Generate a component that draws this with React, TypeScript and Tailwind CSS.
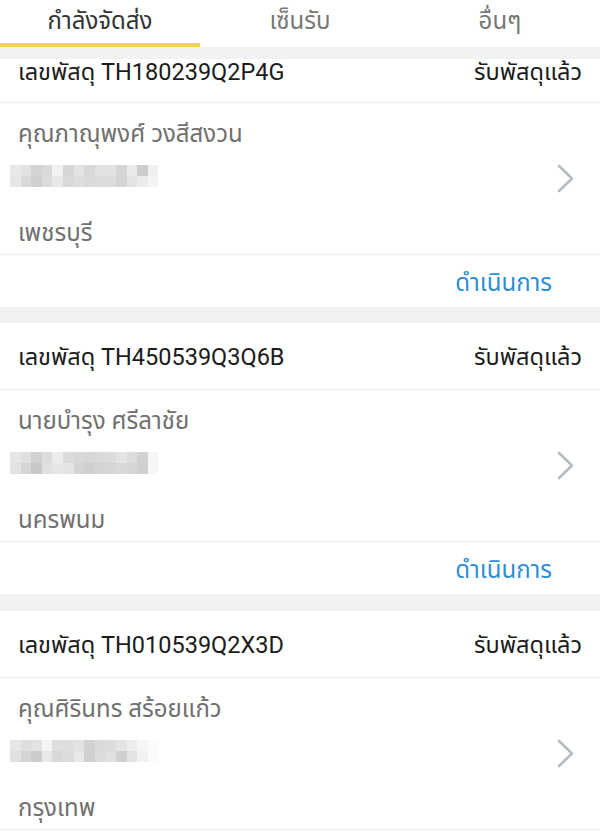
import React from 'react';

type Parcel = {
  id: string;
  name: string;
  province: string;
  blur: number[][];
};

const PARCELS: Parcel[] = [
  {
    id: 'TH180239Q2P4G',
    name: 'คุณภาณุพงศ์ วงสีสงวน',
    province: 'เพชรบุรี',
    blur: [
      [0xe8, 0xe2, 0xd4, 0xda, 0xf2, 0xd6, 0xe3, 0xd8, 0xe1, 0xe2, 0xd5, 0xea, 0xcc, 0xf0],
      [0xe6, 0xd9, 0xcf, 0xdc, 0xe8, 0xd9, 0xde, 0xda, 0xdc, 0xdc, 0xd4, 0xe3, 0xec, 0xf4],
    ],
  },
  {
    id: 'TH450539Q3Q6B',
    name: 'นายบำรุง  ศรีลาชัย',
    province: 'นครพนม',
    blur: [
      [0xe6, 0xe0, 0xd0, 0xdc, 0xec, 0xdb, 0xd8, 0xd6, 0xd9, 0xdc, 0xe4, 0xdc, 0xd2, 0xf6],
      [0xe2, 0xd6, 0xc8, 0xe0, 0xe6, 0xe4, 0xd4, 0xcf, 0xd3, 0xd6, 0xd8, 0xd6, 0xd0, 0xf6],
    ],
  },
  {
    id: 'TH010539Q2X3D',
    name: 'คุณศิรินทร สร้อยแก้ว',
    province: 'กรุงเทพ',
    blur: [
      [0xe6, 0xde, 0xe2, 0xf4, 0xde, 0xde, 0xe2, 0xd2, 0xda, 0xdc, 0xe4, 0xee, 0xf6, 0xfb],
      [0xe0, 0xd4, 0xcc, 0xe8, 0xd8, 0xdc, 0xe8, 0xd0, 0xdc, 0xe0, 0xd0, 0xe4, 0xf2, 0xfb],
    ],
  },
];

const gray = (v: number) => `rgb(${v}, ${v}, ${v})`;

const Chevron = () => (
  <svg width="18" height="29" viewBox="0 0 18 29" fill="none">
    <polyline
      points="2,2 15,14.5 2,27"
      stroke="#b4bbc1"
      strokeWidth="2.6"
      strokeLinecap="round"
      strokeLinejoin="round"
    />
  </svg>
);

const BlurredPhone = ({ rows }: { rows: number[][] }) => (
  <div className="ml-[10px] flex flex-col blur-[0.6px]">
    {rows.map((row, r) => (
      <div key={r} className="flex">
        {row.map((v, c) => (
          <div key={c} className="w-[10.6px] h-[11px]" style={{ backgroundColor: gray(v) }} />
        ))}
      </div>
    ))}
  </div>
);

const ParcelCard = ({ p, first, last }: { p: Parcel; first?: boolean; last?: boolean }) => (
  <div className="bg-white">
    {/* header */}
    <div
      className={`flex justify-between px-[18px] text-[23.5px] text-[#1c1c1c] ${
        first ? 'h-[43px] items-start leading-[26px]' : 'h-[66px] items-center pt-[3px]'
      }`}
    >
      <span>เลขพัสดุ {p.id}</span>
      <span>รับพัสดุแล้ว</span>
    </div>
    <div className="h-px bg-[#ececec]" />

    {/* body */}
    <div className="flex items-center justify-between h-[151px] pr-[25px]">
      <div className="flex flex-col text-[24px] text-[#707070]">
        <div className="pl-[18px] mt-[10px] leading-[28px]">{p.name}</div>
        <div className="mt-[17px]">
          <BlurredPhone rows={p.blur} />
        </div>
        <div className="pl-[18px] mt-[32px] leading-[28px]">{p.province}</div>
      </div>
      <Chevron />
    </div>
    <div className="h-px bg-[#ececec]" />

    {!last && (
      <>
        <div className="flex items-center justify-end h-[52px] pr-[48px] pt-[3px] text-[24px] text-[#2d8fd5]">
          ดำเนินการ
        </div>
        <div className={`${first ? 'h-[16px]' : 'h-[17px]'} bg-[#f2f2f2]`} />
      </>
    )}
  </div>
);

export default function App() {
  return (
    <div
      className="w-[600px] h-[833px] overflow-hidden bg-white"
      style={{ fontFamily: 'Roboto, "Noto Sans", "Noto Sans Thai", sans-serif' }}
    >
      {/* tabs */}
      <div className="flex h-[47px] bg-white">
        <div className="flex-1 flex flex-col">
          <div className="flex-1 flex items-center justify-center text-[24px] text-[#333333] pb-[2px]">
            กำลังจัดส่ง
          </div>
          <div className="h-[4px] bg-[#f3cf63]" />
        </div>
        <div className="flex-1 flex items-center justify-center text-[24px] text-[#777777] pb-[6px]">
          เซ็นรับ
        </div>
        <div className="flex-1 flex items-center justify-center text-[24px] text-[#777777] pb-[6px]">
          อื่นๆ
        </div>
      </div>
      <div className="h-[12px] bg-[#f2f2f2]" />

      {PARCELS.map((p, i) => (
        <ParcelCard key={p.id} p={p} first={i === 0} last={i === PARCELS.length - 1} />
      ))}
    </div>
  );
}
